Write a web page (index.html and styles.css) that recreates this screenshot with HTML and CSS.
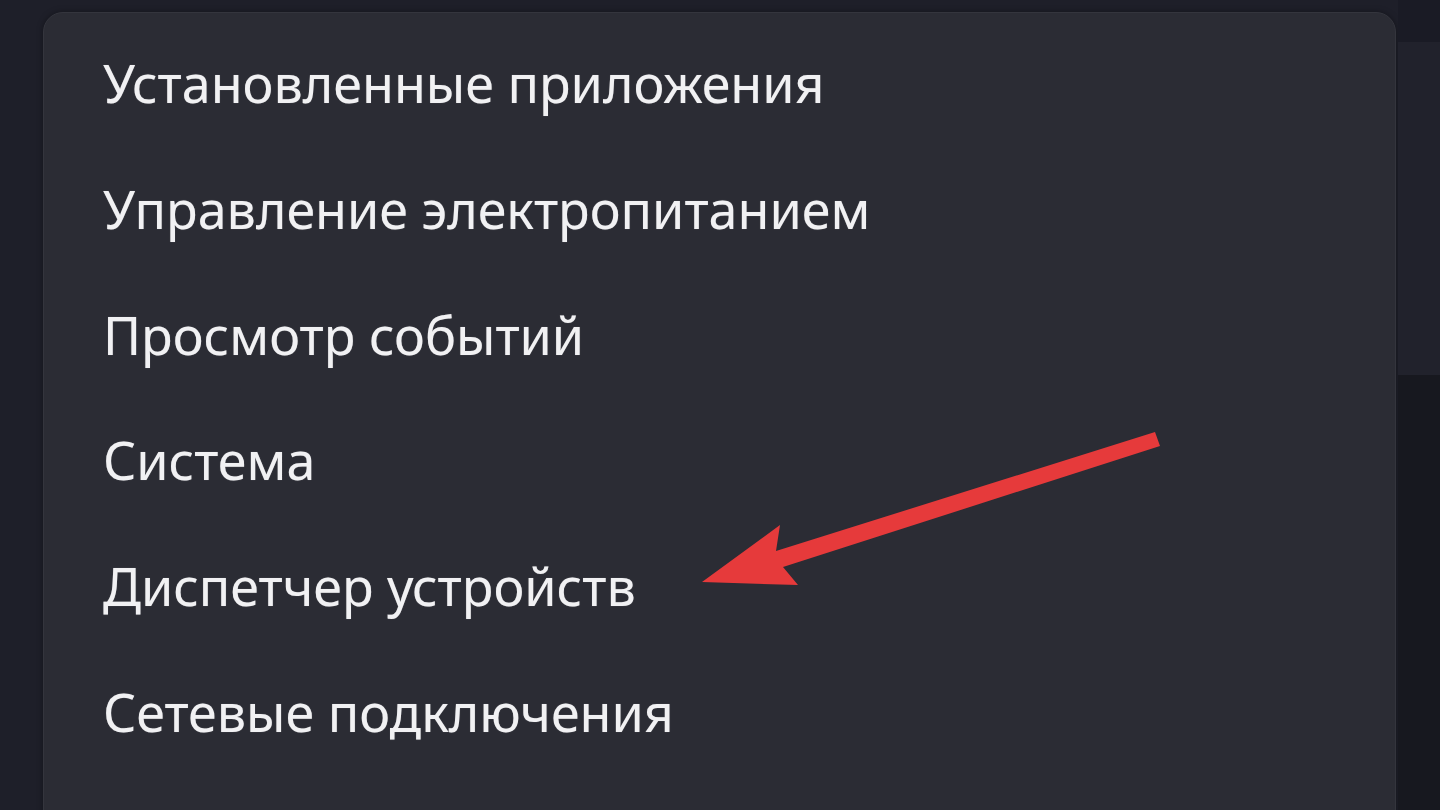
FILE: index.html
```html
<!DOCTYPE html>
<html lang="ru">
<head>
<meta charset="utf-8">
<link rel="stylesheet" href="styles.css">
</head>
<body>
<div class="screen">
  <div class="gutter"></div>
  <div class="menu">
    <div class="item">Установленные приложения</div>
    <div class="item">Управление электропитанием</div>
    <div class="item">Просмотр событий</div>
    <div class="item">Система</div>
    <div class="item">Диспетчер устройств</div>
    <div class="item">Сетевые подключения</div>
    <svg class="arrow" width="1440" height="810" viewBox="0 0 1440 810">
      <polygon points="702,582 780,525 776,551 1155,432 1160,446 783,567 798,585" fill="#e63a3b"/>
    </svg>
  </div>
  <div class="side">
    <div class="side-top"></div>
    <div class="side-mid"></div>
    <div class="side-bot"></div>
  </div>
</div>
</body>
</html>
```
FILE: styles.css
```css
html, body {
  margin: 0;
  padding: 0;
  width: 1440px;
  height: 810px;
  overflow: hidden;
  background: #1e1f29;
}
.screen {
  display: flex;
  width: 1440px;
  height: 810px;
}
.gutter {
  width: 43px;
  flex: none;
}
.menu {
  width: 1353px;
  flex: none;
  margin-top: 12px;
  height: 820px;
  box-sizing: border-box;
  background: #2b2c34;
  border: 1px solid #34353d;
  border-radius: 20px 20px 0 0;
  padding: 7px 0 0 59px;
  display: flex;
  flex-direction: column;
  box-shadow: 0 0 6px rgba(0,0,0,0.35);
}
.item {
  height: 125.8px;
  line-height: 125.8px;
  flex: none;
  font-family: "Noto Sans", "Open Sans", sans-serif;
  font-size: 52px;
  color: #f1f1f3;
  white-space: nowrap;
  text-shadow: 0 0 1px rgba(255,255,255,0.35);
}
.arrow {
  position: absolute;
  left: 0;
  top: 0;
  pointer-events: none;
}
.side {
  flex: 1;
  display: flex;
  flex-direction: column;
  margin-left: 2px;
}
.side-top {
  height: 42px;
  background: #1a1b25;
}
.side-mid {
  height: 333px;
  background: #21222c;
}
.side-bot {
  flex: 1;
  background: #17181f;
}
```
